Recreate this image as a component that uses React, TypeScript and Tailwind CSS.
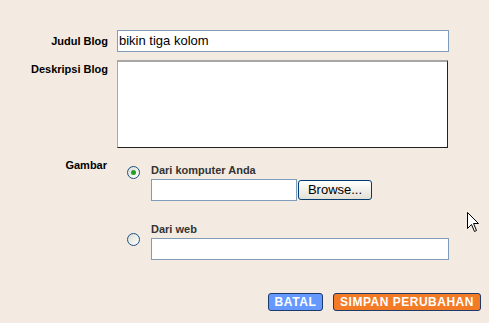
import React from "react";

const label = "font-['Liberation_Sans',Arial,sans-serif] text-[11px] leading-[13px] font-bold";

function Radio({ checked }: { checked?: boolean }) {
  return (
    <div className="w-[13px] h-[13px] rounded-full border border-[#1c5180] bg-gradient-to-br from-[#dcdcd6] to-white flex items-center justify-center">
      {checked && <div className="w-[5px] h-[5px] rounded-full bg-[#21a121]" />}
    </div>
  );
}

export default function App() {
  return (
    <div className="relative w-[489px] h-[323px] bg-[#f3ebe2] pt-[30px] font-['Liberation_Sans',Arial,sans-serif] overflow-hidden">
      <div className="grid grid-cols-[108px_332px] gap-x-[9px]">
        {/* Judul */}
        <div className={`${label} text-right text-black self-center`}>Judul Blog</div>
        <div className="h-[22px] border border-[#7f9db9] bg-white px-[1px] flex items-center text-[13px] text-black">
          bikin tiga kolom
        </div>

        {/* Deskripsi */}
        <div className={`${label} text-right text-black pt-[3px] mt-[8px]`}>Deskripsi Blog</div>
        <div className="mt-[8px] w-[331px] h-[88px] bg-white border-t-2 border-l border-t-[#a7a7a7] border-l-[#a7a7a7] border-r border-b border-r-[#222] border-b-[#222]" />

        {/* Gambar */}
        <div className={`${label} text-right text-black mt-[11px] pr-[1px]`}>Gambar</div>
        <div className="mt-[11px] pt-[5px]">
          <div className="flex items-start">
            <div className="ml-[10px] mt-[2px]">
              <Radio checked />
            </div>
            <div className="ml-[11px]">
              <div className={`${label} text-[#333]`}>Dari komputer Anda</div>
              <div className="mt-[2px] flex items-center">
                <div className="w-[146px] h-[22px] border border-[#7f9db9] bg-white" />
                <div className="ml-[1px] w-[74px] h-[20px] rounded-[3px] border border-[#003c74] bg-gradient-to-b from-white to-[#e3e1d6] flex items-center justify-center text-[13px] text-black">
                  Browse...
                </div>
              </div>
            </div>
          </div>
          <div className="flex items-start mt-[22px]">
            <div className="ml-[10px] mt-[10px]">
              <Radio />
            </div>
            <div className="ml-[11px]">
              <div className={`${label} text-[#333]`}>Dari web</div>
              <div className="mt-[2px] w-[298px] h-[22px] border border-[#7f9db9] bg-white" />
            </div>
          </div>
        </div>
      </div>

      <div className="flex justify-end gap-[10px] pr-[8px] mt-[33px]">
        <div className="w-[55px] h-[18px] rounded-[3px] border border-[#1d3a6b] bg-[#6699ff] flex items-center justify-center text-white text-[12px] font-bold tracking-[0.6px] leading-none">
          BATAL
        </div>
        <div className="w-[148px] h-[18px] rounded-[3px] border border-[#1d3a6b] bg-[#f47b26] flex items-center justify-center text-white text-[12px] font-bold tracking-[0.5px] leading-none">
          SIMPAN PERUBAHAN
        </div>
      </div>

      <svg className="absolute left-[467px] top-[212px]" width="13" height="22" viewBox="0 0 13 22">
        <path d="M0.5 0.5 L0.5 16.5 L4.5 12.5 L7.5 19.5 L9.5 18.5 L6.5 11.5 L11.5 11.5 Z" fill="white" stroke="black" strokeWidth="1" />
      </svg>
    </div>
  );
}
